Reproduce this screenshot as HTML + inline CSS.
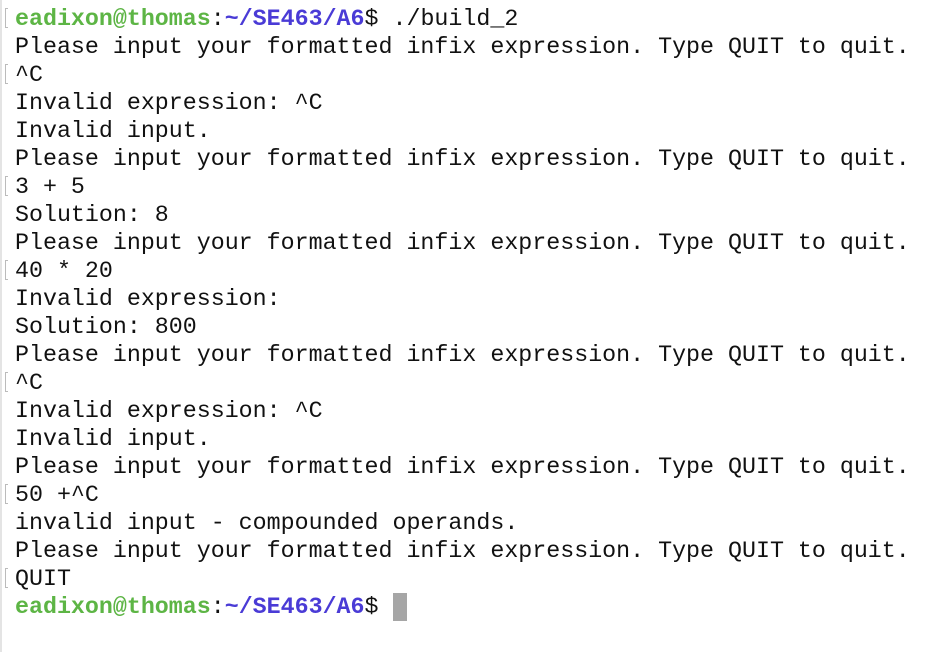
<!DOCTYPE html>
<html><head><meta charset="utf-8"><style>
html,body{margin:0;padding:0;background:#fff;width:934px;height:652px;overflow:hidden}
body{border-left:2px solid #e4e4e4;box-sizing:border-box}
pre{margin:0;position:absolute;left:15px;top:5px;font-family:"Liberation Mono",monospace;font-size:23.3px;line-height:28px;color:#111}
.g{color:#5db545;font-weight:bold}.b{color:#4a3bd6;font-weight:bold}
.m{position:absolute;left:5px;width:3px;height:20px;border:1.5px solid #bbb;border-right:none;box-sizing:border-box}
.cur{display:inline-block;width:14px;height:28px;background:#a6a6a6;vertical-align:top}
</style></head><body>
<div class="m" style="top:8px"></div>
<div class="m" style="top:64px"></div>
<div class="m" style="top:176px"></div>
<div class="m" style="top:260px"></div>
<div class="m" style="top:372px"></div>
<div class="m" style="top:484px"></div>
<div class="m" style="top:568px"></div>
<pre><span class="g">eadixon@thomas</span>:<span class="b">~/SE463/A6</span>$ ./build_2
Please input your formatted infix expression. Type QUIT to quit.
^C
Invalid expression: ^C
Invalid input.
Please input your formatted infix expression. Type QUIT to quit.
3 + 5
Solution: 8
Please input your formatted infix expression. Type QUIT to quit.
40 * 20
Invalid expression: 
Solution: 800
Please input your formatted infix expression. Type QUIT to quit.
^C
Invalid expression: ^C
Invalid input.
Please input your formatted infix expression. Type QUIT to quit.
50 +^C
invalid input - compounded operands.
Please input your formatted infix expression. Type QUIT to quit.
QUIT
<span class="g">eadixon@thomas</span>:<span class="b">~/SE463/A6</span>$ <span class="cur"></span></pre>
</body></html>
